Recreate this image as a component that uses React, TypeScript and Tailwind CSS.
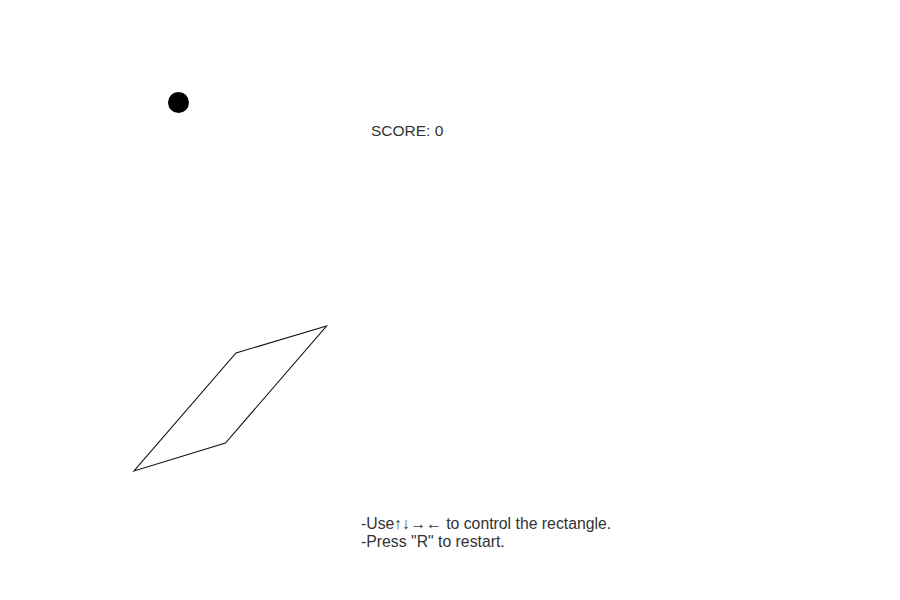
import React from "react";

const Board: React.FC = () => {
    return (
        <svg
            className="absolute inset-0"
            width={900}
            height={600}
            viewBox="0 0 900 600"
        >
            <circle cx={178.5} cy={102.5} r={10.5} fill="#000" />
            <polygon
                points="326.5,326 236,353 134,471 225.5,443"
                fill="none"
                stroke="#111"
                strokeWidth={1.1}
                strokeLinejoin="miter"
            />
        </svg>
    );
};

const App: React.FC = () => {
    return (
        <div className="relative w-[900px] h-[600px] bg-white overflow-hidden font-['Liberation_Sans',Arial,sans-serif] text-[#333]">
            <Board />
            <div className="relative flex flex-col">
                <div className="pt-[121px] pl-[371px] text-[15.5px] leading-[20px]">
                    SCORE: 0
                </div>
                <div className="mt-[374px] pl-[361px] text-[15.8px] leading-[18px] flex flex-col">
                    <span>-Use↑↓→← to control the rectangle.</span>
                    <span>-Press "R" to restart.</span>
                </div>
            </div>
        </div>
    );
};

export default App;
